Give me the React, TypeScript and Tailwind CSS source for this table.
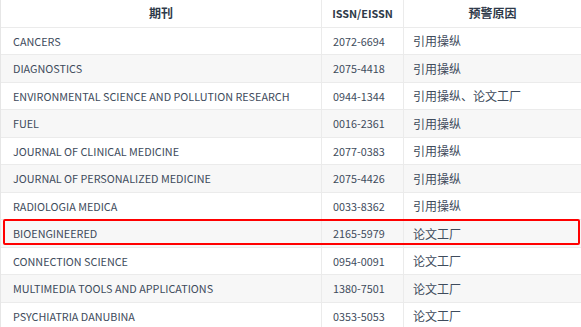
import React from "react";

const rows = [
  { journal: "CANCERS", issn: "2072-6694", reason: "引用操纵" },
  { journal: "DIAGNOSTICS", issn: "2075-4418", reason: "引用操纵" },
  { journal: "ENVIRONMENTAL SCIENCE AND POLLUTION RESEARCH", issn: "0944-1344", reason: "引用操纵、论文工厂" },
  { journal: "FUEL", issn: "0016-2361", reason: "引用操纵" },
  { journal: "JOURNAL OF CLINICAL MEDICINE", issn: "2077-0383", reason: "引用操纵" },
  { journal: "JOURNAL OF PERSONALIZED MEDICINE", issn: "2075-4426", reason: "引用操纵" },
  { journal: "RADIOLOGIA MEDICA", issn: "0033-8362", reason: "引用操纵" },
  { journal: "BIOENGINEERED", issn: "2165-5979", reason: "论文工厂" },
  { journal: "CONNECTION SCIENCE", issn: "0954-0091", reason: "论文工厂" },
  { journal: "MULTIMEDIA TOOLS AND APPLICATIONS", issn: "1380-7501", reason: "论文工厂" },
  { journal: "PSYCHIATRIA DANUBINA", issn: "0353-5053", reason: "论文工厂" },
];

const font = "font-['Noto_Sans_CJK_SC','Noto_Sans',sans-serif]";

export default function App() {
  return (
    <div className={`${font} relative w-[581px] h-[327px] overflow-hidden bg-white text-[10.8px] text-[#3e4b5c]`}>
      <div className="border-l border-[#e6e6e6]">
        {/* header */}
        <div className="grid grid-cols-[321px_82px_1fr] h-[27.5px] border-b border-[#ebebeb] font-semibold text-[#2e3a49]">
          <div className="flex items-center justify-center border-r border-[#ebebeb] text-[12px]">期刊</div>
          <div className="flex items-center justify-center border-r border-[#ebebeb]">ISSN/EISSN</div>
          <div className="flex items-center justify-center text-[12px]">预警原因</div>
        </div>

        {rows.map((row, i) => (
          <div
            key={row.issn}
            className={`grid grid-cols-[321px_82px_1fr] h-[27.5px] border-b border-[#ebebeb] ${
              i % 2 === 1 ? "bg-[#f7f7f7]" : "bg-white"
            }`}
          >
            <div className="flex items-center pl-3 border-r border-[#ebebeb]">{row.journal}</div>
            <div className="flex items-center pl-[11px] border-r border-[#ebebeb]">{row.issn}</div>
            <div className="flex items-center pl-[9px] pt-px text-[12px]">{row.reason}</div>
          </div>
        ))}
      </div>

      {/* highlight */}
      <div className="absolute left-[3px] top-[219px] w-[577px] h-[26px] border-2 border-[#ff0000] rounded-[2px]" />
    </div>
  );
}
